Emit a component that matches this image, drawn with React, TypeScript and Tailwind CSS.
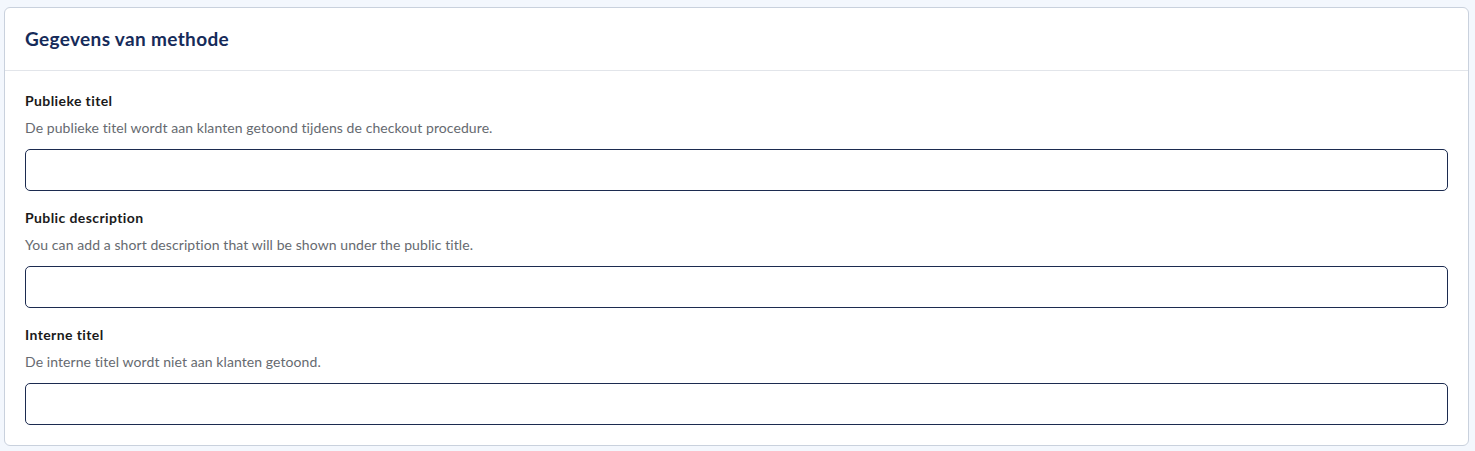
import React from 'react';

const fields = [
  {
    label: 'Publieke titel',
    help: 'De publieke titel wordt aan klanten getoond tijdens de checkout procedure.',
  },
  {
    label: 'Public description',
    help: 'You can add a short description that will be shown under the public title.',
  },
  {
    label: 'Interne titel',
    help: 'De interne titel wordt niet aan klanten getoond.',
  },
];

export default function App() {
  return (
    <div className="min-h-[451px] bg-[#f3f7fd] pt-[7px] pl-[4px] pr-[6px] pb-[5px] font-['Lato',sans-serif]">
      <div className="rounded-[6px] border border-[#c9d1dd] bg-white">
        <div className="border-b border-[#e2e5ea] px-5 py-5">
          <h2 className="text-[19px] leading-[22px] font-bold tracking-[0.35px] text-[#162b5a]">Gegevens van methode</h2>
        </div>
        <div className="flex flex-col gap-[17px] px-5 pt-5 pb-5">
          {fields.map((f) => (
            <div key={f.label} className="flex flex-col">
              <label className="text-[14px] leading-5 font-bold tracking-[0.4px] text-[#1a1a1a]">{f.label}</label>
              <p className="mt-[7px] text-[14px] leading-5 tracking-[0.08px] text-[#666a70]">{f.help}</p>
              <input
                type="text"
                className="mt-[11px] h-[42px] w-full rounded-[5px] border border-[#1c2b50] bg-white px-3 text-[14px] outline-none"
              />
            </div>
          ))}
        </div>
      </div>
    </div>
  );
}
